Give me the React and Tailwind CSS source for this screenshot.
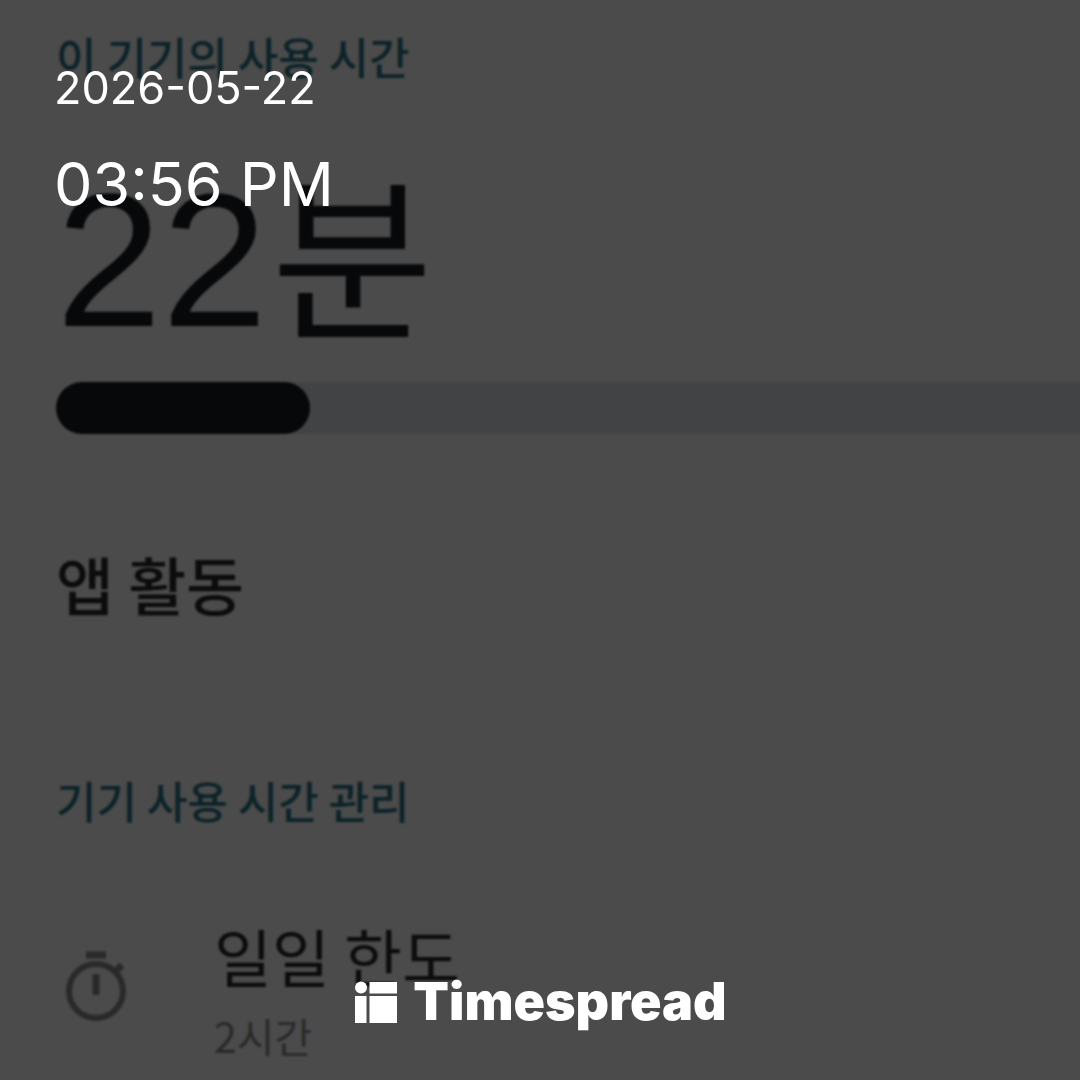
import React from 'react';

const TimerIcon = () => (
  <svg className="w-[60px] h-[72px]" viewBox="0 0 60 72" fill="none" stroke="#8c8c8c" strokeWidth={6} aria-hidden="true">
    <circle cx="30" cy="40" r="27" />
    <path d="M20 4h20M30 23v21" strokeWidth={7} />
    <path d="M49 21l7-7" strokeWidth={7} />
  </svg>
);

const TimespreadMark = () => (
  <svg className="w-[42px] h-[42px]" viewBox="0 0 42 42" fill="currentColor" aria-hidden="true">
    <circle cx="6" cy="6.5" r="6" />
    <rect x="14.5" y="1" width="27.5" height="11.5" />
    <rect x="0" y="15" width="11.5" height="27" />
    <rect x="14.5" y="15" width="27.5" height="27" />
  </svg>
);

const UsageScreen = () => (
  <main className="pt-[26px] pl-14">
    <h2 className="text-[44px] leading-[60px] font-medium text-[#2c7588]">이 기기의 사용 시간</h2>

    <p className="mt-[60px] flex items-baseline gap-1 text-[176px] leading-[208px] text-[#151b21]">
      <span className="font-['Liberation_Sans'] text-[190px]">22</span>
      <span>분</span>
    </p>

    {/* Usage bar */}
    <div className="mt-[18px] h-[52px] rounded-l-full bg-[#dce0e8]">
      <div className="w-[254px] h-full rounded-full bg-[#151b21]" />
    </div>

    <h3 className="mt-[109px] text-[63px] leading-[80px] font-medium text-[#2a2a2a]">앱 활동</h3>

    <h2 className="mt-[147px] text-[44px] leading-[60px] font-medium text-[#2c7588]">기기 사용 시간 관리</h2>

    <div className="mt-[85px] flex gap-[88px] pl-2.5">
      <div className="pt-9">
        <TimerIcon />
      </div>
      <div>
        <h3 className="text-[63px] leading-[80px] text-[#2a2a2a]">일일 한도</h3>
        <p className="text-[41px] leading-[80px] text-[#8c8c8c]">2시간</p>
      </div>
    </div>
  </main>
);

const App = () => {
  return (
    <div className="relative min-h-screen overflow-hidden bg-[#fafafa] font-['Noto_Sans_CJK_KR',sans-serif]">
      <UsageScreen />

      {/* Dimmed overlay with timestamp and brand */}
      <div className="absolute inset-0 flex flex-col justify-between bg-black/70 backdrop-blur-[1px] text-white font-['Inter',sans-serif]">
        <div className="pt-16 pl-[54px]">
          <p className="text-[45px] leading-[48px]">2026-05-22</p>
          <p className="mt-10 text-[61px] leading-[64px]">03:56 PM</p>
        </div>
        <div className="flex items-center justify-center gap-4 pb-12 pl-0.5">
          <TimespreadMark />
          <span className="text-[52px] leading-[60px] font-black">Timespread</span>
        </div>
      </div>
    </div>
  );
};

export default App;
